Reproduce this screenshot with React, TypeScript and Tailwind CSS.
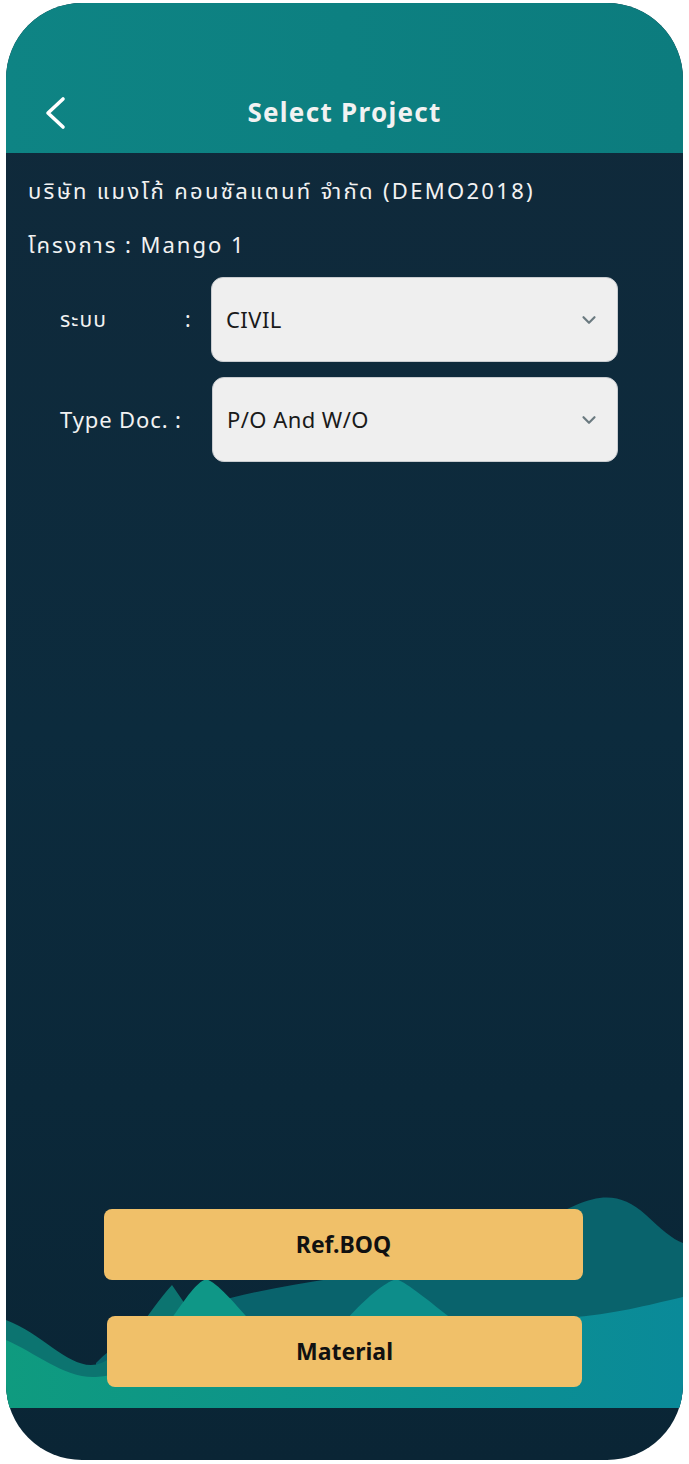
import { ChevronDown } from "lucide-react";

const font = { fontFamily: '"Noto Sans", "Noto Sans Thai", "Liberation Sans", sans-serif' };

function Waves() {
  return (
    <svg
      className="absolute inset-x-0 bottom-0 h-[215px] w-full"
      viewBox="0 0 677 215"
      preserveAspectRatio="none"
    >
      <defs>
        <linearGradient id="front" x1="0" x2="1" y1="0" y2="0">
          <stop offset="0" stopColor="#0f9b7f" />
          <stop offset="1" stopColor="#0a8a99" />
        </linearGradient>
      </defs>
      {/* back hill, right peak */}
      <path
        d="M90,215 L90,170 C140,120 230,100 330,85 C440,70 520,35 570,12 C598,0 618,2 640,22 C655,36 666,46 677,50 L677,215 Z"
        fill="#09636c"
      />
      {/* left mid hill */}
      <path
        d="M0,127 C35,140 60,172 85,172 C115,172 140,120 166,92 L250,215 L0,215 Z"
        fill="#0c7470"
      />
      {/* bright peaks */}
      <path
        d="M150,215 L166,125 C180,105 190,90 200,86 C212,90 228,110 242,125 L270,215 Z"
        fill="#0f9787"
      />
      <path
        d="M330,215 L342,125 C360,105 378,90 390,86 C402,90 425,110 445,125 L470,215 Z"
        fill="#0d8d8a"
      />
      {/* front wave */}
      <path
        d="M0,147 C30,160 60,186 90,184 C140,180 210,150 300,142 C400,134 500,128 570,124 C615,120 650,110 677,104 L677,215 L0,215 Z"
        fill="url(#front)"
      />
    </svg>
  );
}

function SelectBox({ value }: { value: string }) {
  return (
    <div className="flex h-[85px] flex-1 items-center justify-between rounded-[12px] border border-[#c9ccd0] bg-[#efefef] pl-[14px] pr-[17px]">
      <span className="text-[22px] tracking-[0.02em] text-[#1a1a1a]">{value}</span>
      <ChevronDown className="h-[22px] w-[22px] text-[#6b7a80]" strokeWidth={2.4} />
    </div>
  );
}

export default function App() {
  return (
    <div className="min-h-screen w-[689px] bg-white pl-[6px] pt-[3px]" style={font}>
      <div className="flex h-[1457px] w-[677px] flex-col overflow-hidden rounded-[76px] bg-gradient-to-b from-[#10293a] via-[#0c2b3d] to-[#0a2535]">
        <header className="flex h-[150px] shrink-0 items-end bg-gradient-to-r from-[#0e8484] to-[#0c7c7e] pb-[13px]">
          <div className="relative flex h-[56px] w-full items-center justify-center">
            <svg
              className="absolute left-[38px] top-[12px] h-[34px] w-[24px]"
              viewBox="0 0 24 34"
              fill="none"
              stroke="white"
              strokeWidth="3.6"
              strokeLinecap="round"
              strokeLinejoin="round"
            >
              <polyline points="19,3 4,17 19,31" />
            </svg>
            <h1 className="text-[26px] font-bold tracking-[0.05em] text-[#f2f2f2]">Select Project</h1>
          </div>
        </header>

        <main className="flex flex-1 flex-col">
          <div className="pl-[22px] pt-[22px] text-[22px] leading-[30px] text-[#f2f2f2]">
            <p className="tracking-[0.105em]">บริษัท แมงโก้ คอนซัลแตนท์ จำกัด (DEMO2018)</p>
            <p className="mt-[24px] tracking-[0.09em]">โครงการ : Mango 1</p>
          </div>

          <div className="mt-[18px] flex flex-col gap-[15px] pl-[54px] pr-[65px]">
            <div className="flex items-center">
              <div className="flex w-[151px] shrink-0 items-center text-[21px] text-[#f2f2f2]">
                <span className="w-[125px] tracking-[0.05em]">ระบบ</span>
                <span>:</span>
              </div>
              <SelectBox value="CIVIL" />
            </div>
            <div className="flex items-center">
              <div className="w-[152px] shrink-0 text-[22px] tracking-[0.04em] text-[#f2f2f2]">Type Doc. :</div>
              <SelectBox value="P/O And W/O" />
            </div>
          </div>

          <div className="flex-1" />

          <div className="relative flex h-[215px] flex-col items-center justify-start pt-[16px]">
            <Waves />
            <button className="relative ml-[-2px] h-[71px] w-[479px] rounded-[8px] bg-[#f0c069] text-[23px] font-bold text-[#111]">
              Ref.BOQ
            </button>
            <button className="relative mt-[36px] h-[71px] w-[475px] rounded-[8px] bg-[#f0c069] text-[23px] font-bold text-[#111]">
              Material
            </button>
          </div>
        </main>

        <div className="h-[52px] shrink-0" />
      </div>
    </div>
  );
}
